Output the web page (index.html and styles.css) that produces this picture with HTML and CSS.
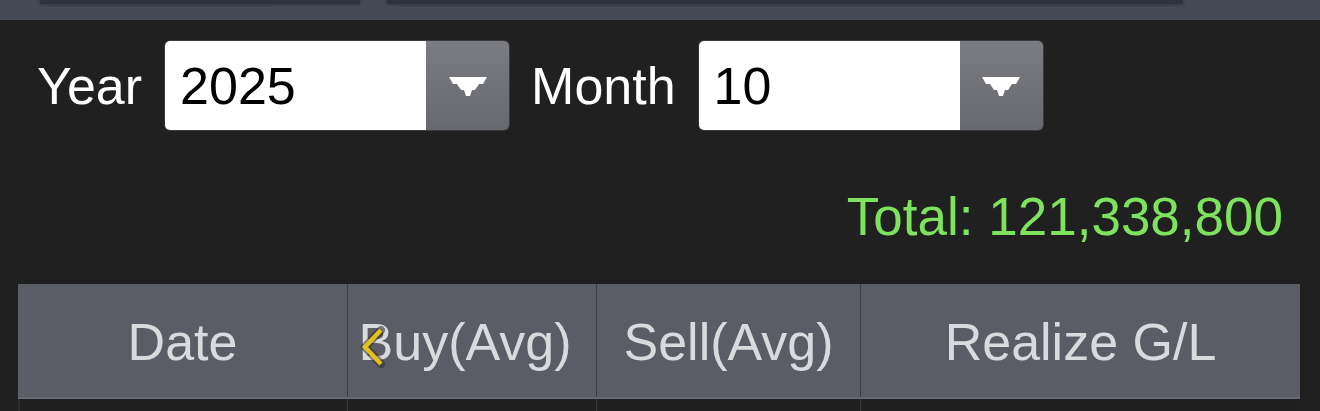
FILE: index.html
```html
<!DOCTYPE html>
<html>
<head>
<meta charset="utf-8">
<link rel="stylesheet" href="styles.css">
</head>
<body>
<div class="topbar">
  <div class="cap cap-a"><div class="cap-edge"></div><div class="cap-line"></div></div>
  <div class="cap cap-b"><div class="cap-edge"></div><div class="cap-line"></div></div>
</div>

<div class="filters">
  <span class="label label-year">Year</span>
  <div class="select select-year">
    <div class="select-value">2025</div>
    <div class="select-btn">
      <svg width="40" height="21" viewBox="0 0 40 21"><path d="M1 1 H39 L35 8 H31 L27 14 H24 L22 20 H18 L16 14 H13 L9 8 H5 Z" fill="#fff"/></svg>
    </div>
  </div>
  <span class="label label-month">Month</span>
  <div class="select">
    <div class="select-value">10</div>
    <div class="select-btn">
      <svg width="40" height="21" viewBox="0 0 40 21"><path d="M1 1 H39 L35 8 H31 L27 14 H24 L22 20 H18 L16 14 H13 L9 8 H5 Z" fill="#fff"/></svg>
    </div>
  </div>
</div>

<div class="total">Total: 121,338,800</div>

<div class="table">
  <div class="row head">
    <div class="cell c-date">Date</div>
    <div class="cell c-buy"><span class="buy-text">Buy(Avg)<svg class="chev" width="26" height="42" viewBox="0 0 26 42"><polyline points="21,4 5,21 21,38" fill="none" stroke="#2a2a2a" stroke-width="8" stroke-linejoin="round" stroke-linecap="round" opacity="0.55"/><polyline points="21,4 5,21 21,38" fill="none" stroke="#e2c11c" stroke-width="4.5" stroke-linejoin="miter" stroke-linecap="butt"/></svg></span></div>
    <div class="cell c-sell">Sell(Avg)</div>
    <div class="cell c-gl">Realize G/L</div>
  </div>
  <div class="row body">
    <div class="cell c-date"></div>
    <div class="cell c-buy"></div>
    <div class="cell c-sell"></div>
    <div class="cell c-gl"></div>
  </div>
</div>
</body>
</html>
```

FILE: styles.css
```css
* { box-sizing: border-box; }
html, body { margin: 0; padding: 0; }
body {
  background: #212021;
  font-family: "Liberation Sans", Arial, sans-serif;
  overflow: hidden;
}

.topbar {
  height: 20px;
  background: #444955;
  display: flex;
  padding-left: 40px;
  gap: 27px;
}
.cap { display: flex; flex-direction: column; }
.cap-a { width: 320px; }
.cap-b { width: 796px; }
.cap-edge {
  height: 3px;
  background: #2f323b;
  box-shadow: 0 1px 3px rgba(20, 22, 28, 0.7);
}
.cap-line {
  height: 2px;
  margin-top: 3px;
  background: #3a3e48;
  border-bottom: 1px solid #4a4f5b;
}
.cap-a .cap-line { margin-left: 6px; width: 227px; }
.cap-b .cap-line { margin-left: 12px; width: 773px; }

.filters {
  display: flex;
  align-items: center;
  margin-top: 21px;
  padding-left: 37px;
  height: 89px;
}
.label {
  color: #ffffff;
  font-size: 52px;
}
.label-year { margin-right: 23px; }
.select-year { margin-right: 22px; }
.label-month { margin-right: 23px; }
.select {
  width: 344px;
  height: 89px;
  display: flex;
  border-radius: 5px;
  overflow: hidden;
  box-shadow: 0 0 0 1px rgba(120, 120, 125, 0.3);
}
.select-value {
  flex: 1;
  background: #ffffff;
  color: #000;
  font-size: 52px;
  display: flex;
  align-items: center;
  padding-left: 15px;
}
.select-btn {
  width: 83px;
  background: linear-gradient(#7b7c81, #68696e);
  display: flex;
  align-items: center;
  justify-content: center;
}
.select-btn svg { filter: blur(0.6px); margin-top: 1px; }

.total {
  margin-top: 57px;
  padding-right: 37px;
  text-align: right;
  color: #7ee35c;
  font-size: 53px;
  line-height: 60px;
}

.table {
  margin: 37px 20px 0 18px;
}
.row { display: flex; }
.cell {
  border-left: 1px solid #3a3d44;
  display: flex;
  align-items: center;
  justify-content: center;
}
.cell:first-child { border-left: none; }
.c-date { width: 329px; }
.c-buy { width: 249px; }
.c-sell { width: 264px; }
.c-gl { width: 440px; }
.head {
  height: 115px;
  background: #5a5d65;
  border-bottom: 2px solid #676a72;
  color: #d9dadd;
  font-size: 52px;
}
.head .cell { padding-top: 2px; }
.c-buy .buy-text { position: relative; margin-right: 14px; }
.chev {
  position: absolute;
  left: 1px;
  top: 14px;
}
.body { height: 115px; background: #1f1f20; }
.body .cell { border-left-color: #36393f; }
.body .c-date { border-left: 2px solid #2b2b2d; }
```
